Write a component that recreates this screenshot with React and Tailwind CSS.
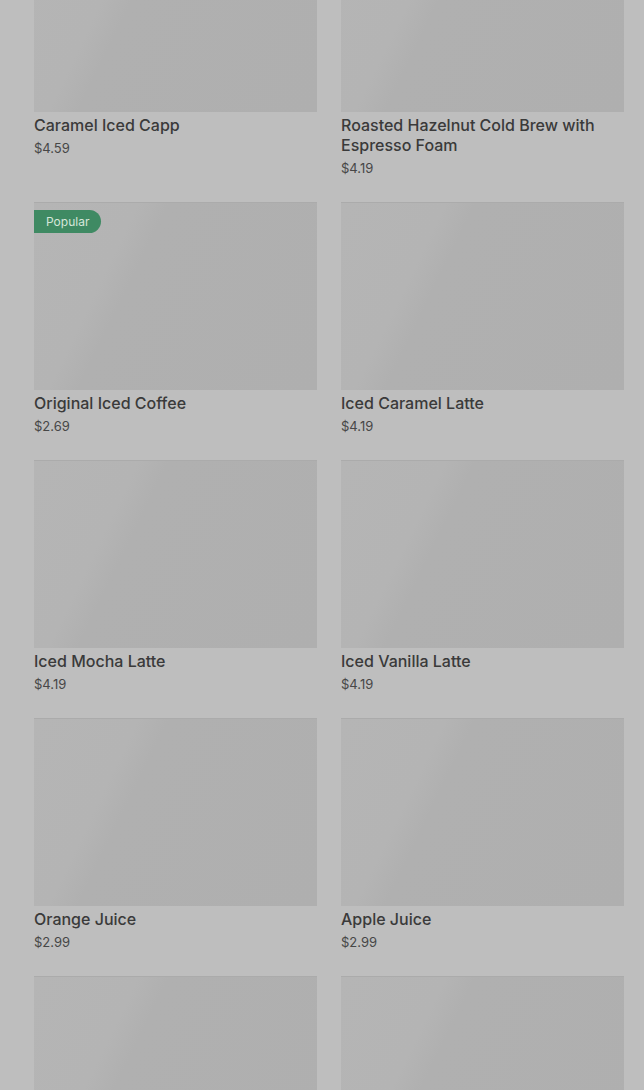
const items = [
  { name: "Caramel Iced Capp", price: "$4.59" },
  { name: "Roasted Hazelnut Cold Brew with Espresso Foam", price: "$4.19" },
  { name: "Original Iced Coffee", price: "$2.69", badge: "Popular" },
  { name: "Iced Caramel Latte", price: "$4.19" },
  { name: "Iced Mocha Latte", price: "$4.19" },
  { name: "Iced Vanilla Latte", price: "$4.19" },
  { name: "Orange Juice", price: "$2.99" },
  { name: "Apple Juice", price: "$2.99" },
  { name: "", price: "" },
  { name: "", price: "" },
];

function Card({ item }) {
  return (
    <div className="flex flex-col">
      <div className="relative h-[188px] w-full bg-[linear-gradient(116deg,#b5b5b5_0%,#b4b4b4_28%,#b0b0b0_36%,#afafaf_100%)] border-t border-[#ababab]">
        {item.badge && (
          <div className="absolute left-0 top-[7px] flex h-[23px] items-center rounded-r-full bg-[#3f8a63] pl-[12px] pr-[12px] text-[12px] text-[#d6e6da]">
            {item.badge}
          </div>
        )}
      </div>
      {item.name && (
        <>
          <div className="mt-[3px] text-[16px] font-medium leading-5 text-[#3a3a3a]">{item.name}</div>
          <div className="mt-[5px] text-[13px] leading-4 text-[#474747]">{item.price}</div>
        </>
      )}
    </div>
  );
}

export default function App() {
  return (
    <div className="h-[1090px] w-[644px] overflow-hidden bg-[#bebebe]" style={{ fontFamily: "Inter, 'Noto Sans', sans-serif" }}>
      <div className="-mt-[76px] ml-[34px] mr-[20px] grid grid-cols-2 gap-x-6 gap-y-[26px]">
        {items.map((it, i) => (
          <Card key={i} item={it} />
        ))}
      </div>
    </div>
  );
}
